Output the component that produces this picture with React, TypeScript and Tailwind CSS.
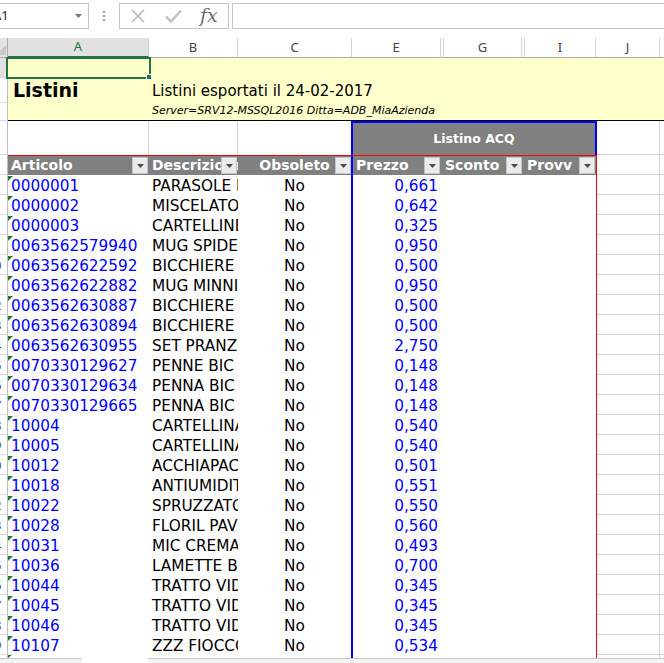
import React from "react";

const rows: [string, string, string][] = [
  ["0000001", "PARASOLE IN TESSUTO", "0,661"],
  ["0000002", "MISCELATORE", "0,642"],
  ["0000003", "CARTELLINE", "0,325"],
  ["0063562579940", "MUG SPIDERMAN", "0,950"],
  ["0063562622592", "BICCHIERE", "0,500"],
  ["0063562622882", "MUG MINNIE", "0,950"],
  ["0063562630887", "BICCHIERE", "0,500"],
  ["0063562630894", "BICCHIERE", "0,500"],
  ["0063562630955", "SET PRANZO", "2,750"],
  ["0070330129627", "PENNE BIC", "0,148"],
  ["0070330129634", "PENNA BIC", "0,148"],
  ["0070330129665", "PENNA BIC", "0,148"],
  ["10004", "CARTELLINA", "0,540"],
  ["10005", "CARTELLINA", "0,540"],
  ["10012", "ACCHIAPACOLORE", "0,501"],
  ["10018", "ANTIUMIDITA", "0,551"],
  ["10022", "SPRUZZATORE", "0,550"],
  ["10028", "FLORIL PAVIMENTI", "0,560"],
  ["10031", "MIC CREMA", "0,493"],
  ["10036", "LAMETTE BIC", "0,700"],
  ["10044", "TRATTO VIDEO", "0,345"],
  ["10045", "TRATTO VIDEO", "0,345"],
  ["10046", "TRATTO VIDEO", "0,345"],
  ["10107", "ZZZ FIOCCO", "0,534"],
];

function RowHdr({ n, sel }: { n: number; sel?: boolean }) {
  return (
    <div
      className={`w-[8px] shrink-0 h-full overflow-hidden border-r border-b border-r-[#bdbdbd] border-b-[#dadada] flex items-center ${
        sel ? "bg-[#e1e1e1]" : "bg-white"
      }`}
    >
      <div className="w-[26px] shrink-0 -ml-[19px] text-center text-[13px] leading-[18px] text-[#444] font-['Noto_Sans',sans-serif]">
        {n}
      </div>
    </div>
  );
}

function Tri() {
  return (
    <svg className="absolute left-0 top-[1px]" width="5" height="5" viewBox="0 0 5 5">
      <path d="M0 0H5L0 5Z" fill="#1e7b34" />
    </svg>
  );
}

function FilterBtn({ right1 = true }: { right1?: boolean }) {
  return (
    <div
      className={`absolute ${right1 ? "right-[1px]" : "right-0"} top-[1px] w-[16px] h-[17px] bg-[#ebebeb] border border-[#c4c4c4] flex items-center justify-center`}
    >
      <svg width="7" height="4" viewBox="0 0 7 4">
        <path d="M0 0H7L3.5 4Z" fill="#4a4a4a" />
      </svg>
    </div>
  );
}

function ColHdr({ w, label, sel, last }: { w?: string; label?: string; sel?: boolean; last?: boolean }) {
  return (
    <div
      className={`${w ?? "flex-1"} shrink-0 h-full flex items-center justify-center text-[13px] font-['Noto_Sans',sans-serif] ${
        sel
          ? "bg-[#e1e1e1] text-[#217346] border-b-2 border-b-[#217346] border-r border-r-[#d4d4d4]"
          : "bg-white text-[#444] border-b border-b-[#ababab]"
      } ${!sel && !last ? "border-r border-r-[#d4d4d4]" : ""}`}
    >
      {label}
    </div>
  );
}

function DataRow({ n, code, desc, price }: { n: number; code: string; desc: string; price: string }) {
  return (
    <div className="flex h-[20px] text-[15.3px] leading-[18px]">
      <RowHdr n={n} />
      <div className="relative w-[141px] shrink-0 pl-[3px] text-[#0000ff] flex items-end overflow-hidden whitespace-nowrap">
        <Tri />
        {code}
      </div>
      <div className="w-[89px] shrink-0 pl-[3px] flex items-end overflow-hidden whitespace-nowrap text-black">
        {desc}
      </div>
      <div className="w-[113px] shrink-0 flex items-end justify-center text-black">No</div>
      <div className="w-[90px] shrink-0 border-l-2 border-l-[#0000ff] flex items-end justify-end pr-[3px] text-[#0000ff]">
        {price}
      </div>
      <div className="w-[81px] shrink-0" />
      <div className="w-[75px] shrink-0 border-r border-r-[#ff0000]" />
      <div className="w-[63px] shrink-0 border-r border-b border-[#d4d4d4]" />
      <div className="flex-1 border-b border-[#d4d4d4]" />
    </div>
  );
}

export default function App() {
  return (
    <div className="relative w-[664px] h-[663px] overflow-hidden bg-white font-['DejaVu_Sans',sans-serif] text-black">
      {/* Formula bar */}
      <div className="flex items-start h-[38px] pt-[3px]">
        <div className="relative w-[89px] h-[26px] shrink-0 border-y border-r border-[#c6c6c6] flex items-center overflow-hidden">
          <span className="-ml-[7px] text-[13px] text-[#222] font-['Noto_Sans',sans-serif]">A1</span>
          <svg className="absolute left-[75px] top-[10px]" width="7" height="4" viewBox="0 0 7 4">
            <path d="M0 0H7L3.5 4Z" fill="#777" />
          </svg>
        </div>
        <div className="w-[30px] h-[26px] shrink-0 flex flex-col items-center justify-center gap-[2px]">
          <div className="w-[2px] h-[2px] bg-[#9a9a9a]" />
          <div className="w-[2px] h-[2px] bg-[#9a9a9a]" />
          <div className="w-[2px] h-[2px] bg-[#9a9a9a]" />
        </div>
        <div className="w-[110px] h-[26px] shrink-0 border border-[#c6c6c6] flex items-center">
          <svg className="ml-[11px]" width="14" height="14" viewBox="0 0 14 14">
            <path d="M1 1L13 13M13 1L1 13" stroke="#b9b9b9" strokeWidth="1.6" fill="none" />
          </svg>
          <svg className="ml-[20px]" width="17" height="14" viewBox="0 0 17 14">
            <path d="M1 7.5L6 12.5L16 1.5" stroke="#c4c4c4" strokeWidth="2.6" fill="none" />
          </svg>
          <span className="ml-[18px] -mt-[2px] text-[19px] italic text-[#6d6d6d] font-['DejaVu_Serif',serif]">fx</span>
        </div>
        <div className="ml-[3px] flex-1 h-[26px] border-y border-l border-[#c6c6c6]" />
      </div>

      {/* Column headers */}
      <div className="flex h-[20px]">
        <div className="w-[8px] shrink-0 h-full bg-[#e4e4e4] border-r border-b border-[#ababab] relative overflow-hidden">
          <svg className="absolute left-0 bottom-[2px]" width="6" height="10" viewBox="0 0 6 10">
            <path d="M6 0V10H-4Z" fill="#c8c8c8" />
          </svg>
        </div>
        <ColHdr w="w-[141px]" label="A" sel />
        <ColHdr w="w-[89px]" label="B" />
        <ColHdr w="w-[114px]" label="C" />
        <ColHdr w="w-[89px]" label="E" />
        <ColHdr w="w-[3px]" />
        <ColHdr w="w-[78px]" label="G" />
        <ColHdr w="w-[3px]" />
        <ColHdr w="w-[71px]" label="I" />
        <ColHdr w="w-[64px]" label="J" />
        <ColHdr last />
      </div>

      {/* Row 1 */}
      <div className="flex h-[20px]">
        <RowHdr n={1} sel />
        <div className="flex-1 bg-[#ffffcc]" />
      </div>
      {/* Row 2 */}
      <div className="flex h-[25px]">
        <RowHdr n={2} />
        <div className="flex-1 bg-[#ffffcc] flex">
          <div className="w-[141px] shrink-0 pl-[5px] flex items-end pb-[3px]">
            <span className="text-[19px] leading-[19px] font-bold">Listini</span>
          </div>
          <div className="flex-1 pl-[3px] flex items-end pb-[4px] whitespace-nowrap">
            <span className="text-[15px] leading-[15px]">Listini esportati il 24-02-2017</span>
          </div>
        </div>
      </div>
      {/* Row 3 */}
      <div className="flex h-[18px]">
        <RowHdr n={3} />
        <div className="flex-1 bg-[#ffffcc] flex border-b border-b-black">
          <div className="w-[141px] shrink-0" />
          <div className="flex-1 pl-[3px] flex items-center whitespace-nowrap">
            <span className="text-[11px] italic">Server=SRV12-MSSQL2016 Ditta=ADB_MiaAzienda</span>
          </div>
        </div>
      </div>
      {/* Row 4 */}
      <div className="flex h-[34px]">
        <RowHdr n={4} />
        <div className="w-[141px] shrink-0 border-r border-[#d4d4d4]" />
        <div className="w-[89px] shrink-0 border-r border-[#d4d4d4]" />
        <div className="w-[113px] shrink-0" />
        <div className="w-[246px] shrink-0 bg-[#808080] border-2 border-b-0 border-[#0000ff] flex items-center justify-center text-white font-bold text-[12.5px]">
          Listino ACQ
        </div>
        <div className="w-[63px] shrink-0 border-r border-b border-[#d4d4d4]" />
        <div className="flex-1 border-b border-[#d4d4d4]" />
      </div>
      {/* Row 5 header */}
      <div className="flex h-[20px] text-[14px] font-bold text-white leading-[19px]">
        <RowHdr n={5} />
        <div className="relative w-[141px] shrink-0 bg-[#808080] border-t border-t-[#ff0000] pl-[3px] whitespace-nowrap overflow-hidden">
          Articolo
          <FilterBtn />
        </div>
        <div className="relative w-[89px] shrink-0 bg-[#808080] border-t border-t-[#ff0000] pl-[3px] whitespace-nowrap overflow-hidden">
          Descrizione
          <FilterBtn />
        </div>
        <div className="relative w-[113px] shrink-0 bg-[#808080] border-t border-t-[#ff0000] text-center whitespace-nowrap overflow-hidden">
          Obsoleto
          <FilterBtn right1={false} />
        </div>
        <div className="relative w-[90px] shrink-0 bg-[#808080] border-t border-t-[#ff0000] border-l-2 border-l-[#0000ff] pl-[3px] whitespace-nowrap overflow-hidden">
          Prezzo
          <FilterBtn />
        </div>
        <div className="relative w-[81px] shrink-0 bg-[#808080] border-t border-t-[#ff0000] pl-[4px] whitespace-nowrap overflow-hidden">
          Sconto
          <FilterBtn right1={false} />
        </div>
        <div className="relative w-[75px] shrink-0 bg-[#808080] border-t border-t-[#ff0000] border-r border-r-[#ff0000] pl-[5px] whitespace-nowrap overflow-hidden">
          Provv
          <FilterBtn />
        </div>
        <div className="w-[63px] shrink-0 border-r border-b border-[#d4d4d4]" />
        <div className="flex-1 border-b border-[#d4d4d4]" />
      </div>

      {/* Data rows */}
      {rows.map((r, i) => (
        <DataRow key={i} n={i + 6} code={r[0]} desc={r[1]} price={r[2]} />
      ))}

      {/* Partial row 30 */}
      <div className="flex h-[3px]">
        <div className="w-[8px] shrink-0 h-full border-r border-[#bdbdbd]" />
        <div className="relative w-[141px] shrink-0">
          <svg className="absolute left-0 top-0" width="4" height="3" viewBox="0 0 4 3">
            <path d="M0 0H4L0 3Z" fill="#1e7b34" />
          </svg>
        </div>
        <div className="w-[89px] shrink-0" />
        <div className="w-[113px] shrink-0" />
        <div className="w-[90px] shrink-0 border-l-2 border-l-[#0000ff]" />
        <div className="w-[81px] shrink-0" />
        <div className="w-[75px] shrink-0 border-r border-r-[#ff0000]" />
        <div className="w-[63px] shrink-0 border-r border-[#d4d4d4]" />
        <div className="flex-1" />
      </div>

      {/* Bottom bar */}
      <div className="flex h-[5px]">
        <div className="w-[82px] shrink-0 bg-[#f3f3f3] border-t border-[#c6c6c6]" />
        <div className="w-[66px] shrink-0 bg-white" />
        <div className="flex-1 bg-[#f3f3f3] border-t border-[#c6c6c6]" />
      </div>

      {/* Selection of A1 */}
      <div className="absolute left-[6px] top-[57px] w-[145px] h-[22px] border-2 border-[#217346]" />
      <div className="absolute left-[146px] top-[74px] w-[6px] h-[6px] bg-[#217346] border border-white" />
    </div>
  );
}
